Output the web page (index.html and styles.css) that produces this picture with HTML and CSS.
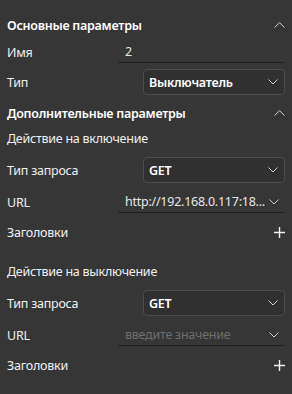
FILE: index.html
```html
<!DOCTYPE html>
<html lang="ru">
<head>
<meta charset="UTF-8">
<meta name="viewport" content="width=device-width, initial-scale=1.0">
<title>Параметры</title>
<link rel="stylesheet" href="styles.css">
</head>
<body>

<div class="panel">
  <div class="section-head">
    <span>Основные параметры</span>
    <svg class="collapse" width="11" height="6" viewBox="0 0 11 6"><path d="M0.5 5.5 L5.5 0.7 L10.5 5.5" /></svg>
  </div>

  <div class="row row-name">
    <span class="label">Имя</span>
    <div class="field"><span class="value">2</span></div>
  </div>

  <div class="row row-select">
    <span class="label">Тип</span>
    <div class="select">
      <span class="value strong">Выключатель</span>
      <svg class="chevron" width="10" height="6" viewBox="0 0 10 6"><path d="M0.5 0.5 L5 5 L9.5 0.5" /></svg>
    </div>
  </div>

  <div class="section-head second">
    <span>Дополнительные параметры</span>
    <svg class="collapse" width="11" height="6" viewBox="0 0 11 6"><path d="M0.5 5.5 L5.5 0.7 L10.5 5.5" /></svg>
  </div>

  <!-- включение -->
  <div class="sub-head">Действие на включение</div>

  <div class="row row-select">
    <span class="label">Тип запроса</span>
    <div class="select">
      <span class="value strong">GET</span>
      <svg class="chevron" width="10" height="6" viewBox="0 0 10 6"><path d="M0.5 0.5 L5 5 L9.5 0.5" /></svg>
    </div>
  </div>

  <div class="row row-url">
    <span class="label">URL</span>
    <div class="field combo">
      <span class="value">http://192.168.0.117:18...</span>
      <svg class="chevron" width="10" height="6" viewBox="0 0 10 6"><path d="M0.5 0.5 L5 5 L9.5 0.5" /></svg>
    </div>
  </div>

  <div class="row row-headers">
    <span class="label">Заголовки</span>
    <svg class="plus" width="11" height="11" viewBox="0 0 11 11"><path d="M5.5 0 V11 M0 5.5 H11" /></svg>
  </div>

  <!-- выключение -->
  <div class="sub-head spaced">Действие на выключение</div>

  <div class="row row-select">
    <span class="label">Тип запроса</span>
    <div class="select">
      <span class="value strong">GET</span>
      <svg class="chevron" width="10" height="6" viewBox="0 0 10 6"><path d="M0.5 0.5 L5 5 L9.5 0.5" /></svg>
    </div>
  </div>

  <div class="row row-url">
    <span class="label">URL</span>
    <div class="field combo">
      <span class="value placeholder">введите значение</span>
      <svg class="chevron" width="10" height="6" viewBox="0 0 10 6"><path d="M0.5 0.5 L5 5 L9.5 0.5" /></svg>
    </div>
  </div>

  <div class="row row-headers">
    <span class="label">Заголовки</span>
    <svg class="plus" width="11" height="11" viewBox="0 0 11 11"><path d="M5.5 0 V11 M0 5.5 H11" /></svg>
  </div>
</div>

</body>
</html>
```

FILE: styles.css
```css
* {
  box-sizing: border-box;
}
html, body {
  height: 100%;
}
body {
  margin: 0;
  background-color: #363636;
  color: #f0f0f0;
  font-family: "Noto Sans", "Open Sans", sans-serif;
  font-size: 12.5px;
  letter-spacing: -0.25px;
}
.panel {
  padding: 12px 7px 0 7px;
}
.section-head {
  display: flex;
  justify-content: space-between;
  align-items: center;
  height: 26px;
  font-weight: 600;
  color: #ffffff;
}
.section-head.second {
  height: 30px;
}
.collapse path, .chevron path {
  fill: none;
  stroke: #cfcfcf;
  stroke-width: 1;
}
.plus path {
  fill: none;
  stroke: #f0f0f0;
  stroke-width: 1.4;
}
.row {
  display: flex;
  justify-content: space-between;
  align-items: center;
}
.row-name {
  height: 28px;
}
.row-select {
  height: 32px;
}
.row-url {
  height: 32px;
}
.row-headers {
  height: 28px;
}
.sub-head {
  height: 22px;
  line-height: 22px;
  margin-bottom: 4px;
}
.sub-head.spaced {
  margin-top: 15px;
}
.field {
  width: 167px;
  height: 22px;
  display: flex;
  align-items: center;
  justify-content: space-between;
  padding: 0 6px 0 7px;
  border-bottom: 1px solid #1f1f1f;
}
.select {
  width: 142px;
  height: 26px;
  display: flex;
  align-items: center;
  justify-content: space-between;
  padding: 0 6px 0 5px;
  border: 1px solid #4c4c4c;
  border-radius: 4px;
  background-color: #303030;
}
.value {
  white-space: nowrap;
  color: #e6e6e6;
}
.value.strong {
  font-weight: 600;
  color: #ffffff;
}
.value.placeholder {
  color: #6e6e6e;
}
.combo .chevron {
  margin-left: 4px;
}
```
